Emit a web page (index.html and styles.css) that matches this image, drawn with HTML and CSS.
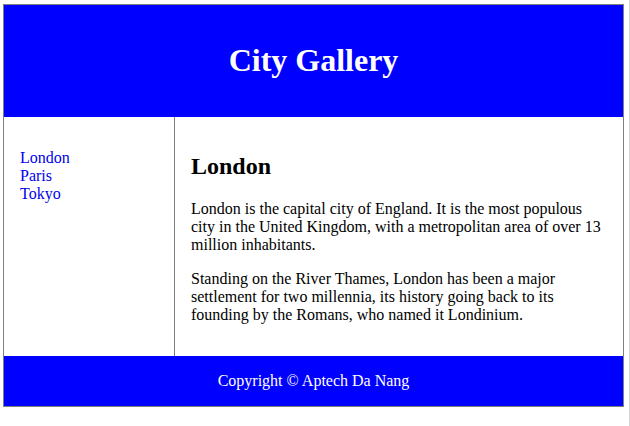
FILE: index.html
```html
<!DOCTYPE html>
<html lang="en">
<head>
<meta charset="utf-8">
<title>City Gallery</title>
<link rel="stylesheet" href="styles.css">
</head>
<body>
<div class="container">
  <header class="bar header">
    <h1 class="title">City Gallery</h1>
  </header>
  <div class="main">
    <nav class="nav">
      <ul class="nav-list">
        <li><a class="nav-link" href="#">London</a></li>
        <li><a class="nav-link" href="#">Paris</a></li>
        <li><a class="nav-link" href="#">Tokyo</a></li>
      </ul>
    </nav>
    <article class="article">
      <h2 class="heading">London</h2>
      <p class="para">London is the capital city of England. It is the most populous city in the United Kingdom, with a metropolitan area of over 13 million inhabitants.</p>
      <p class="para">Standing on the River Thames, London has been a major settlement for two millennia, its history going back to its founding by the Romans, who named it Londinium.</p>
    </article>
  </div>
  <footer class="bar footer">Copyright &copy; Aptech Da Nang</footer>
</div>
</body>
</html>
```
FILE: styles.css
```css
html {
  border-right: 1px solid #d4d4d4;
  min-height: 100%;
  box-sizing: border-box;
}
html, body {
  height: 100%;
}
body {
  margin: 4px 5px 0 3px;
  font-family: "Liberation Serif", "Times New Roman", serif;
  font-size: 16px;
  color: #000;
  background: #fff;
}
.container {
  border: 1px solid gray;
}
.bar {
  padding: 1em;
  color: #fff;
  background-color: #0000ff;
  text-align: center;
}
.title {
  margin: 0.67em 0;
  font-size: 2em;
  font-weight: bold;
}
.main {
  display: flex;
}
.nav {
  flex: 0 0 170px;
  box-sizing: border-box;
  padding: 1em;
}
.nav-list {
  list-style: none;
  margin: 1em 0;
  padding: 0;
}
.nav-link {
  color: #0000ee;
  text-decoration: none;
}
.article {
  flex: 1;
  min-width: 0;
  border-left: 1px solid gray;
  padding: 1em;
}
.heading {
  margin: 0.83em 0;
  font-size: 1.5em;
  font-weight: bold;
}
.para {
  margin: 1em 0;
}
```
